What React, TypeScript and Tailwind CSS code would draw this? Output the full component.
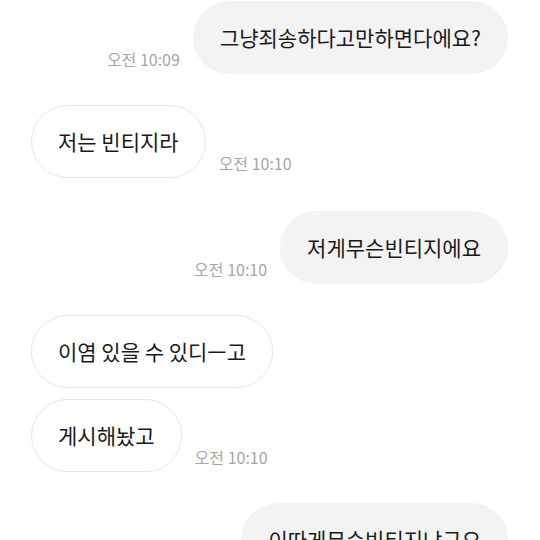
import React from "react";

type Msg = {
  text: string;
  mine: boolean;
  time?: string;
  gap: string;
};

const messages: Msg[] = [
  { text: "그냥죄송하다고만하면다에요?", mine: true, time: "오전 10:09", gap: "mt-[1px]" },
  { text: "저는 빈티지라", mine: false, time: "오전 10:10", gap: "mt-[31px]" },
  { text: "저게무슨빈티지에요", mine: true, time: "오전 10:10", gap: "mt-[33px]" },
  { text: "이염 있을 수 있디ㅡ고", mine: false, gap: "mt-[31px]" },
  { text: "게시해놨고", mine: false, time: "오전 10:10", gap: "mt-[11px]" },
  { text: "이따게무슨빈티지냐구요", mine: true, gap: "mt-[31px]" },
];

const Time = ({ value }: { value: string }) => (
  <span className="mb-[4px] text-[16px] leading-[22px] text-[#a6a6a6] whitespace-nowrap">{value}</span>
);

const Bubble = ({ msg }: { msg: Msg }) => (
  <div
    className={
      msg.mine
        ? "h-[73px] flex items-center px-[27px] pb-[2px] rounded-full bg-[#f3f3f3] whitespace-nowrap"
        : "h-[73px] flex items-center px-[26px] pb-[2px] rounded-full bg-white border border-[#e6e6e6] whitespace-nowrap"
    }
  >
    <span className="text-[21px] leading-[28px] text-[#1a1a1a]">{msg.text}</span>
  </div>
);

export default function App() {
  return (
    <div
      className="w-[540px] h-[540px] overflow-hidden bg-white flex flex-col pl-[31px] pr-[32px]"
      style={{ fontFamily: '"Noto Sans CJK KR", "Noto Sans", sans-serif' }}
    >
      {messages.map((m, i) => (
        <div
          key={i}
          className={
            m.mine
              ? `${m.gap} flex flex-row items-end justify-end gap-[13px] shrink-0`
              : `${m.gap} flex flex-row items-end justify-start gap-[13px] shrink-0`
          }
        >
          {m.mine && m.time && <Time value={m.time} />}
          <Bubble msg={m} />
          {!m.mine && m.time && <Time value={m.time} />}
        </div>
      ))}
    </div>
  );
}
